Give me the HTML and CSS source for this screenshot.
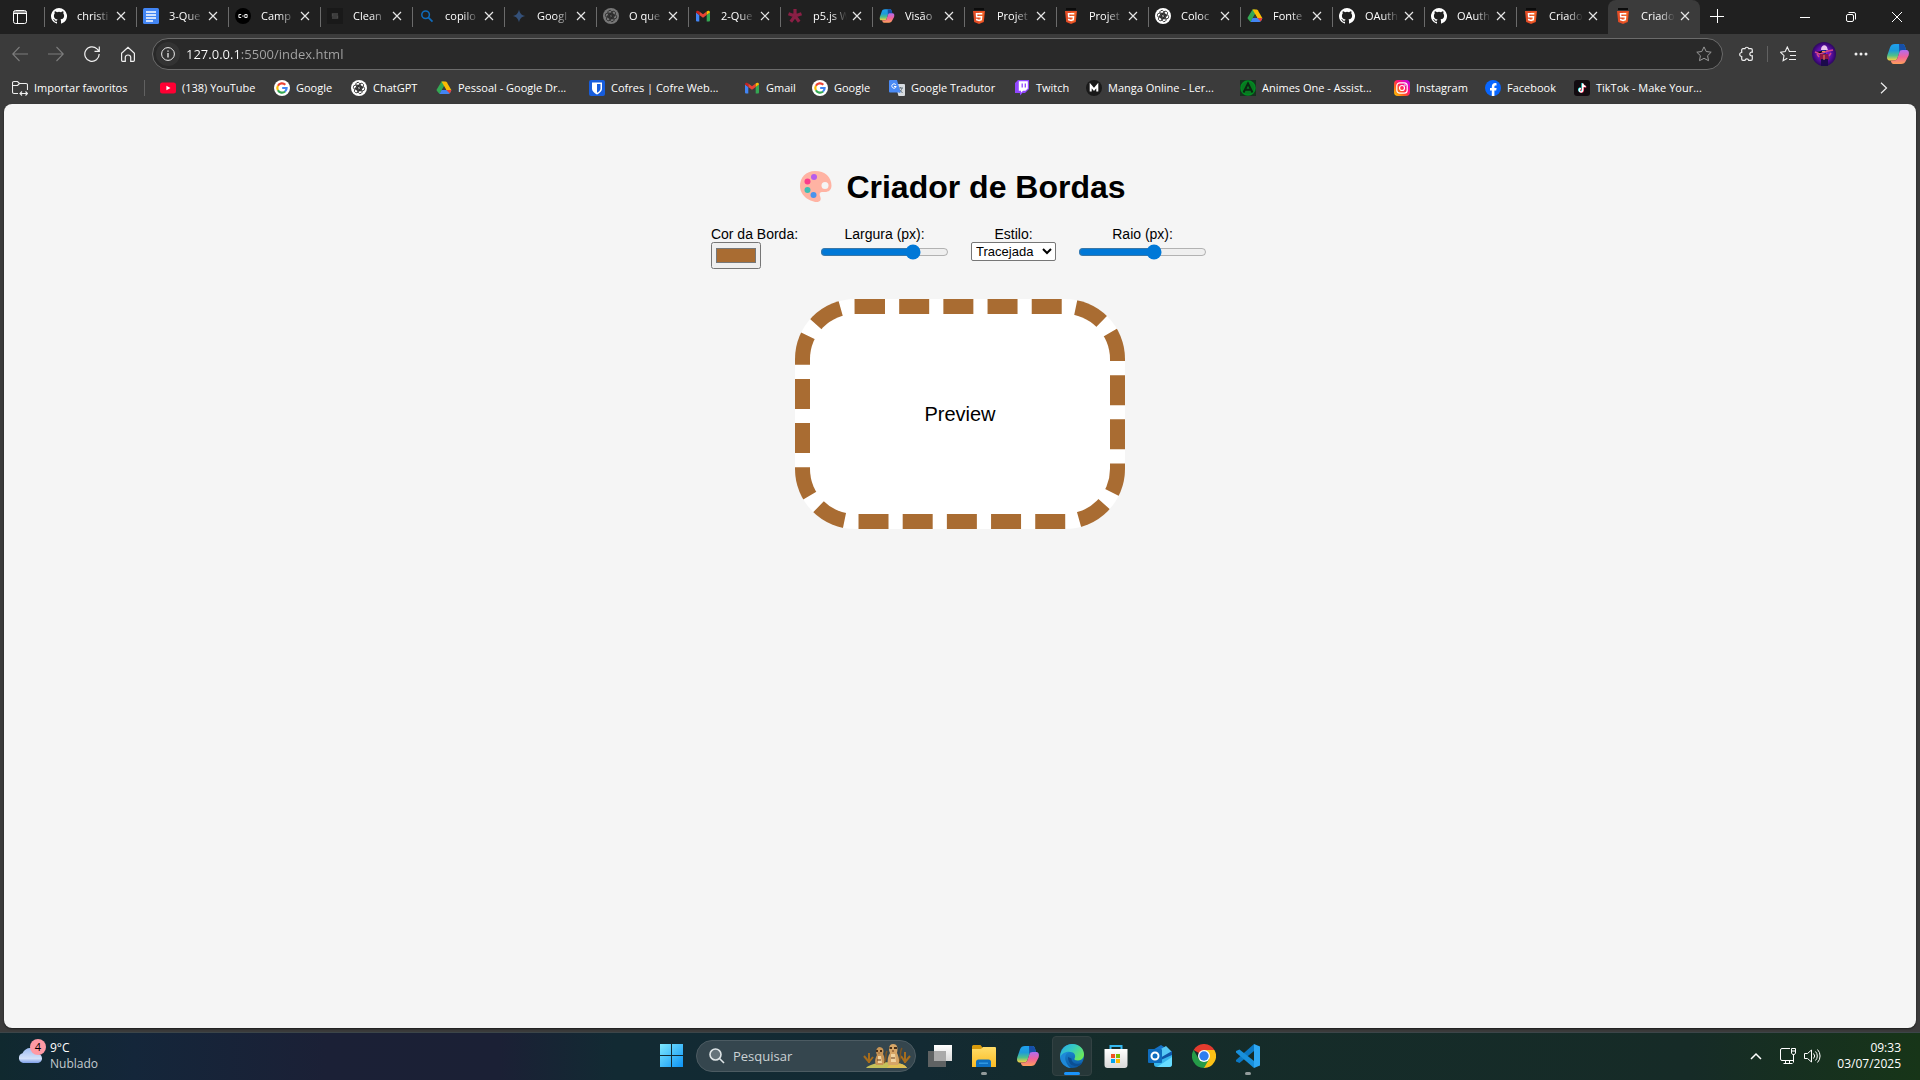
FILE: index.html
```html
<!DOCTYPE html>
<html lang="pt-BR">
<head>
<meta charset="utf-8">
<title>Criador de Bordas</title>
<link rel="stylesheet" href="styles.css">
</head>
<body>
<svg class="sprite" aria-hidden="true">
  <defs>
    <linearGradient id="g-blue" x1="0" y1="0" x2="0" y2="1"><stop offset="0" stop-color="#1fa0f0"/><stop offset=".4" stop-color="#1d9bd8"/><stop offset=".7" stop-color="#4fc08a"/><stop offset="1" stop-color="#ffd23c"/></linearGradient>
    <linearGradient id="g-pink" x1="0" y1="0" x2="0" y2="1"><stop offset="0" stop-color="#b06cf2"/><stop offset=".5" stop-color="#f0629a"/><stop offset="1" stop-color="#ffa05a"/></linearGradient>
    <linearGradient id="g-insta" x1="0" y1="1" x2="1" y2="0"><stop offset="0" stop-color="#ffd600"/><stop offset=".35" stop-color="#ff5a1f"/><stop offset=".6" stop-color="#ff0f7b"/><stop offset="1" stop-color="#b800ff"/></linearGradient>
    <linearGradient id="g-win" x1="0" y1="0" x2="1" y2="1"><stop offset="0" stop-color="#7fe9ff"/><stop offset="1" stop-color="#0c93f5"/></linearGradient>
    <linearGradient id="g-edge" x1="0" y1="0" x2="1" y2=".6"><stop offset="0" stop-color="#2aa9e8"/><stop offset=".5" stop-color="#35c9c0"/><stop offset="1" stop-color="#6be85a"/></linearGradient>
    <linearGradient id="g-edge2" x1="0" y1="0" x2="0" y2="1"><stop offset="0" stop-color="#1e94e0"/><stop offset="1" stop-color="#0c59a4"/></linearGradient>
    <linearGradient id="g-folder" x1="0" y1="0" x2="0" y2="1"><stop offset="0" stop-color="#ffdc68"/><stop offset="1" stop-color="#fbbc24"/></linearGradient>
    <linearGradient id="g-cloud" x1="0" y1="0" x2="0" y2="1"><stop offset="0" stop-color="#9fbdf2"/><stop offset=".7" stop-color="#d3e1fa"/><stop offset="1" stop-color="#7d9ee8"/></linearGradient>
    <linearGradient id="g-paper" x1="0" y1="0" x2="0" y2="1"><stop offset="0" stop-color="#fff"/><stop offset="1" stop-color="#d9d9d9"/></linearGradient>
    <radialGradient id="g-avatar"><stop offset="0" stop-color="#9a20d8"/><stop offset=".6" stop-color="#5d0fa5"/><stop offset="1" stop-color="#2c0660"/></radialGradient>
  </defs>
  <symbol id="i-github" viewBox="0 0 16 16"><path fill="#fff" d="M8 0a8 8 0 0 0-2.53 15.59c.4.07.55-.17.55-.38v-1.49c-2.23.48-2.7-.95-2.7-.95-.36-.92-.89-1.17-.89-1.17-.73-.5.06-.49.06-.49.8.06 1.23.83 1.23.83.71 1.22 1.87.87 2.33.66.07-.52.28-.87.5-1.07-1.77-.2-3.64-.89-3.64-3.95 0-.87.31-1.59.82-2.15-.08-.2-.36-1.02.08-2.12 0 0 .67-.21 2.2.82a7.6 7.6 0 0 1 4 0c1.53-1.04 2.2-.82 2.2-.82.44 1.1.16 1.92.08 2.12.51.56.82 1.27.82 2.15 0 3.07-1.87 3.75-3.65 3.95.29.25.54.73.54 1.48v2.2c0 .21.15.46.55.38A8 8 0 0 0 8 0z"/></symbol>
  <symbol id="i-docs" viewBox="0 0 16 16"><rect width="16" height="16" rx="1.5" fill="#4285f4"/><path d="M3 4h10M3 7h10M3 10h10M3 13h7" stroke="#fff" stroke-width="1.6"/></symbol>
  <symbol id="i-camp" viewBox="0 0 16 16"><circle cx="8" cy="8" r="8" fill="#000"/><path d="M6.2 6.5H3.900v3h2.300M7.2 8h1.600M9.800 6.500h2.300v3H9.800z" fill="none" stroke="#eee"/></symbol>
  <symbol id="i-clean" viewBox="0 0 16 16"><rect width="16" height="16" fill="#191919"/><path d="M11 6H5.5v2h5v2H5" fill="none" stroke="#484848" stroke-width="1.4"/></symbol>
  <symbol id="i-find" viewBox="0 0 16 16"><circle cx="6.600" cy="6.800" r="3.800" fill="none" stroke="#0f6cbd" stroke-width="1.500"/><path d="M9.500 9.700l4 4" stroke="#0f6cbd" stroke-width="1.700"/></symbol>
  <symbol id="i-gemini" viewBox="0 0 16 16"><path fill="#345078" d="M8 1.500c.8 4 2.500 5.700 6.500 6.500-4 .8-5.700 2.500-6.500 6.500C7.200 10.500 5.500 8.800 1.500 8 5.500 7.200 7.200 5.500 8 1.500z"/></symbol>
  <symbol id="i-knot" viewBox="0 0 16 16"><g fill="none" stroke="currentColor" stroke-width=".8"><rect x="2.300" y="5.200" width="8" height="4" rx="2"/><rect x="2.300" y="5.200" width="8" height="4" rx="2" transform="rotate(60 8 8)"/><rect x="2.300" y="5.200" width="8" height="4" rx="2" transform="rotate(120 8 8)"/><rect x="2.300" y="5.200" width="8" height="4" rx="2" transform="rotate(180 8 8)"/><rect x="2.300" y="5.200" width="8" height="4" rx="2" transform="rotate(240 8 8)"/><rect x="2.300" y="5.200" width="8" height="4" rx="2" transform="rotate(300 8 8)"/></g></symbol>
  <symbol id="i-gpt" viewBox="0 0 16 16"><circle cx="8" cy="8" r="8" fill="#fff"/><use href="#i-knot" color="#222"/></symbol>
  <symbol id="i-gpt-dim" viewBox="0 0 16 16"><circle cx="8" cy="8" r="8" fill="#777"/><use href="#i-knot" color="#282828"/></symbol>
  <symbol id="i-gmail" viewBox="0 0 16 16"><path fill="#4285f4" d="M1 4.500l3.300 2.500v6.500H2a1 1 0 0 1-1-1z"/><path fill="#34a853" d="M11.700 7 15 4.500v8a1 1 0 0 1-1 1h-2.300z"/><path fill="#ea4335" d="M4.300 3.400 8 6.200l3.700-2.800V7L8 9.800 4.300 7z"/><path fill="#c5221f" d="M1 4.500C1 2.600 3 2.300 4.300 3.400V7L1 4.500z"/><path fill="#fbbc04" d="M15 4.500c0-1.900-2-2.200-3.300-1.100V7L15 4.500z"/></symbol>
  <symbol id="i-p5" viewBox="0 0 16 16"><path d="M8 8V1M8 8l6.500-2.300M8 8l4.200 5.800M8 8l-4.200 5.800M8 8 1.500 5.700" stroke="#8a1f45" stroke-width="3.200"/></symbol>
  <symbol id="i-copilot" viewBox="0 0 24 24"><path fill="url(#g-blue)" d="M9 2h7.500c1.500 0 2 1 2.500 2.500L20 8h-3.500c-2 0-2.700.8-3.200 2.500L11.500 16c-.6 1.700-1.500 2.500-3.500 2.500H4C1 18.500.6 16 1.400 13L4 5.500C4.800 3 6.500 2 9 2z"/><path fill="#174fa8" d="M13 2h3.500C18 2 18.500 3 19 4.500L20 8h-3.500c-2 0-2.700.8-3.200 2.500z"/><path fill="url(#g-pink)" d="M15 22H7.500C6 22 5.500 21 5 19.500l-.5-1H8c2 0 2.900-.8 3.500-2.500l1.800-5.500C13.800 8.800 14.500 8 16.500 8H20c3 0 3.400 2.500 2.600 5.500L20 18.500c-.8 2.500-2.500 3.500-5 3.500z"/></symbol>
  <symbol id="i-html5" viewBox="0 0 16 16"><path fill="#0c0c0c" d="M3 0h10v2H3z"/><path fill="#e44d26" d="M2 3h12l-1.200 11L8 16l-4.800-2z"/><path fill="#f16529" d="M8 4h5l-1 9.300L8 14.800z"/><path fill="none" stroke="#fff" stroke-width="1.500" d="M11.300 5.800H5.500l.2 2.900h4.800l-.3 3L8 12.500l-2.300-.8v-1"/></symbol>
  <symbol id="i-drive" viewBox="0 0 16 16"><path fill="#34a853" d="M5.500 1.500h2.700L8 6.200 3.500 14 1 11c-.6-.9-.5-1 0-2z"/><path fill="#fbbc04" d="M5.500 1.500h4c.7 0 1 .3 1.300.8L15.300 10h-5z"/><path fill="#4285f4" d="M5.600 10h9.700c0 .8-.3 1.300-.7 2l-.8 1.300c-.3.500-.7.700-1.300.7h-9z"/><path fill="#ea4335" d="M10.300 10h5c0 .8-.3 1.300-.7 2l-.9 1.500z"/><path fill="#3b3b3b" d="M8 6.400 10 10H5.900z"/></symbol>
  <symbol id="i-youtube" viewBox="0 0 16 16"><rect y="2.500" width="16" height="11" rx="2.500" fill="#ff0033"/><path fill="#fff" d="M6.400 5.700 10.500 8l-4.100 2.300z"/></symbol>
  <symbol id="i-google" viewBox="0 0 16 16"><circle cx="8" cy="8" r="8" fill="#fff"/><g fill="none" stroke-width="2.200"><path stroke="#ea4335" d="M11.300 4.700A4.700 4.700 0 0 0 3.900 5.800"/><path stroke="#fbbc04" d="M3.900 5.700a4.700 4.700 0 0 0 0 4.600"/><path stroke="#34a853" d="M3.900 10.300a4.700 4.700 0 0 0 7.200 1.200"/><path stroke="#4285f4" d="M11 11.500A4.600 4.600 0 0 0 12.600 8H8.200"/></g></symbol>
  <symbol id="i-bitwarden" viewBox="0 0 16 16"><rect width="16" height="16" rx="2" fill="#175ddc"/><path fill="#fff" d="M3 2.500h10v6c0 3-2.500 4.600-5 6-2.500-1.400-5-3-5-6z"/><path fill="#175ddc" d="M8 4v8.700c2-1.200 3.500-2.400 3.500-4.300V4z"/></symbol>
  <symbol id="i-translate" viewBox="0 0 16 16"><path fill="#d8dce0" d="M6 4h9a1 1 0 0 1 1 1v10a1 1 0 0 1-1 1H9.500z"/><path fill="none" stroke="#66757f" d="M9 8h5M11.500 7v1M13 8c-.5 2-1.500 3.500-3 4.500M10.500 9.500l3 3.500"/><path fill="#4a8af4" d="M1 0h7l3.700 12.500H1a1 1 0 0 1-1-1V1a1 1 0 0 1 1-1z"/><path fill="none" stroke="#fff" d="M6.800 4.700A2.200 2.200 0 1 0 7.200 6.500H5"/></symbol>
  <symbol id="i-twitch" viewBox="0 0 16 16"><path fill="#9146ff" d="M4 0h11v9l-4 4H8.500L6 15.500V13H1V3z"/><path fill="#fff" d="M4.800 1.200h9v7.300l-2.300 2.300H9l-2 2v-2H4.800z"/><path d="M8.200 3.500v4M11.300 3.500v4" stroke="#9146ff" stroke-width="1.300"/></symbol>
  <symbol id="i-manga" viewBox="0 0 16 16"><circle cx="8" cy="8" r="8" fill="#191919"/><path d="M4.700 11.500v-6L8 9.500l3.300-4v6" fill="none" stroke="#fff" stroke-width="2"/></symbol>
  <symbol id="i-animes" viewBox="0 0 16 16"><rect width="16" height="16" fill="#17321f"/><circle cx="8" cy="8" r="7" fill="#087a20" stroke="#008c22" stroke-width="1.500"/><path d="M3.500 12.500 8 3.500l4.500 9M5.500 9.700h5" fill="none" stroke="#0b2612" stroke-width="2"/></symbol>
  <symbol id="i-instagram" viewBox="0 0 16 16"><rect width="16" height="16" rx="4" fill="url(#g-insta)"/><g fill="none" stroke="#fff" stroke-width="1.200"><rect x="2.800" y="2.800" width="10.400" height="10.400" rx="3"/><circle cx="8" cy="8" r="2.500"/></g><circle cx="11" cy="5" r=".8" fill="#fff"/></symbol>
  <symbol id="i-facebook" viewBox="0 0 16 16"><circle cx="8" cy="8" r="8" fill="#0866ff"/><path fill="#fff" d="M6.800 16v-5.400H5V8.100h1.800V7c0-2.700 1.300-3.900 3.500-3.900l1.200.1v2.200h-.8c-1 0-1.300.5-1.300 1.400v1.300h2.200l-.4 2.500H9.400V16z"/></symbol>
  <symbol id="i-tiktok" viewBox="0 0 16 16"><rect width="16" height="16" rx="3" fill="#120b10"/><g fill="none" stroke-width="1.500"><path stroke="#25f4ee" d="M8.100 3v6.800a1.700 1.700 0 1 1-1.700-1.700M8.100 3.500c.3 1.700 1.500 2.600 3 2.700"/><path stroke="#fe2c55" d="M9.300 3.800v6.800a1.700 1.700 0 1 1-1.700-1.700M9.300 4.300c.3 1.700 1.500 2.600 3 2.700"/><path stroke="#fff" d="M8.700 3.400v6.800A1.700 1.700 0 1 1 7 8.500M8.700 3.900c.3 1.700 1.500 2.600 3 2.700"/></g></symbol>
  <symbol id="i-x" viewBox="0 0 10 10"><path d="M1 1l8 8M9 1 1 9" stroke="#e6e6e6" stroke-width="1.200"/></symbol>
</svg>

<div class="desktop">
  <header class="browser">
    <nav class="tabstrip" aria-label="Guias">
      <button class="tab-menu" aria-label="Menu de guias"><svg width="16" height="16" viewBox="0 0 16 16" fill="none" stroke="#fff"><rect x="1.500" y="1.500" width="13" height="13" rx="2"/><path d="M1.500 3h13M1.500 4.500h13M5.500 4.500v10"/></svg></button>
      <ul class="tabs">
        <li class="tab"><svg><use href="#i-github"/></svg><a href="#">christi</a><button aria-label="Fechar"><svg><use href="#i-x"/></svg></button></li>
        <li class="tab"><svg><use href="#i-docs"/></svg><a href="#">3-Que</a><button aria-label="Fechar"><svg><use href="#i-x"/></svg></button></li>
        <li class="tab"><svg><use href="#i-camp"/></svg><a href="#">Camp</a><button aria-label="Fechar"><svg><use href="#i-x"/></svg></button></li>
        <li class="tab"><svg><use href="#i-clean"/></svg><a href="#">Clean</a><button aria-label="Fechar"><svg><use href="#i-x"/></svg></button></li>
        <li class="tab"><svg><use href="#i-find"/></svg><a href="#">copilo</a><button aria-label="Fechar"><svg><use href="#i-x"/></svg></button></li>
        <li class="tab"><svg><use href="#i-gemini"/></svg><a href="#">Googl</a><button aria-label="Fechar"><svg><use href="#i-x"/></svg></button></li>
        <li class="tab"><svg><use href="#i-gpt-dim"/></svg><a href="#">O que</a><button aria-label="Fechar"><svg><use href="#i-x"/></svg></button></li>
        <li class="tab"><svg><use href="#i-gmail"/></svg><a href="#">2-Que</a><button aria-label="Fechar"><svg><use href="#i-x"/></svg></button></li>
        <li class="tab"><svg><use href="#i-p5"/></svg><a href="#">p5.js W</a><button aria-label="Fechar"><svg><use href="#i-x"/></svg></button></li>
        <li class="tab"><svg><use href="#i-copilot"/></svg><a href="#">Visão</a><button aria-label="Fechar"><svg><use href="#i-x"/></svg></button></li>
        <li class="tab"><svg><use href="#i-html5"/></svg><a href="#">Projet</a><button aria-label="Fechar"><svg><use href="#i-x"/></svg></button></li>
        <li class="tab"><svg><use href="#i-html5"/></svg><a href="#">Projet</a><button aria-label="Fechar"><svg><use href="#i-x"/></svg></button></li>
        <li class="tab"><svg><use href="#i-gpt"/></svg><a href="#">Coloc</a><button aria-label="Fechar"><svg><use href="#i-x"/></svg></button></li>
        <li class="tab"><svg><use href="#i-drive"/></svg><a href="#">Fonte</a><button aria-label="Fechar"><svg><use href="#i-x"/></svg></button></li>
        <li class="tab"><svg><use href="#i-github"/></svg><a href="#">OAuth</a><button aria-label="Fechar"><svg><use href="#i-x"/></svg></button></li>
        <li class="tab"><svg><use href="#i-github"/></svg><a href="#">OAuth</a><button aria-label="Fechar"><svg><use href="#i-x"/></svg></button></li>
        <li class="tab"><svg><use href="#i-html5"/></svg><a href="#">Criado</a><button aria-label="Fechar"><svg><use href="#i-x"/></svg></button></li>
        <li class="tab active"><svg><use href="#i-html5"/></svg><a href="#">Criado</a><button aria-label="Fechar"><svg><use href="#i-x"/></svg></button></li>
      </ul>
      <button class="new-tab" aria-label="Nova guia"><svg width="14" height="14" viewBox="0 0 14 14" stroke="#fff"><path d="M7.500 0v14M0 7.500h14"/></svg></button>
      <div class="window-controls">
        <button aria-label="Minimizar"><svg width="10" height="10" stroke="#fff"><path d="M0 5.500h10"/></svg></button>
        <button aria-label="Restaurar"><svg width="10" height="10" fill="none" stroke="#fff"><rect x=".5" y="2.500" width="7" height="7" rx="1.500"/><path d="M2.500.5H8A1.500 1.500 0 0 1 9.500 2v5.500"/></svg></button>
        <button aria-label="Fechar janela"><svg width="10" height="10" stroke="#fff"><path d="M0 0l10 10M10 0 0 10"/></svg></button>
      </div>
    </nav>

    <div class="toolbar">
      <div class="nav-buttons">
        <button aria-label="Voltar"><svg width="16" height="16" fill="none" stroke="#7d7d7d" stroke-width="1.100"><path d="M16 8H.8M7.500 1 .7 8l6.800 7"/></svg></button>
        <button aria-label="Avançar"><svg width="16" height="16" fill="none" stroke="#7d7d7d" stroke-width="1.100"><path d="M0 8h15.200M8.500 1l6.800 7-6.800 7"/></svg></button>
        <button aria-label="Atualizar"><svg width="16" height="16" fill="none" stroke="#f0f0f0" stroke-width="1.200"><path d="M15.200 8A7.200 7.200 0 1 1 13 2.900L15 5M15.300.5V5.300h-4.800"/></svg></button>
        <button aria-label="Página inicial"><svg width="16" height="16" fill="none" stroke="#f0f0f0" stroke-width="1.200"><path d="M1.600 7.200 8 1.200l6.400 6v7.100c0 .6-.4 1-1 1h-2.700v-4c0-1.300-1-2.300-2.700-2.300S5.300 10 5.300 11.300v4H2.600c-.6 0-1-.4-1-1z"/></svg></button>
      </div>
      <div class="address">
        <button class="site-info" aria-label="Informações do site"><svg width="14" height="14" fill="none" stroke="#eee"><circle cx="7" cy="7" r="6.400"/><path d="M7 6v4.500M7 3.500v1.300" stroke-width="1.300"/></svg></button>
        <input type="text" aria-label="Endereço" value="127.0.0.1:5500/index.html">
        <button class="star" aria-label="Adicionar aos favoritos"><svg width="16" height="16" fill="none" stroke="#9a9a9a"><path d="M8 .9l2.200 4.600 5 .7-3.600 3.500.9 5L8 12.300l-4.500 2.400.9-5L.8 6.200l5-.7z"/></svg></button>
      </div>
      <div class="tools">
        <button aria-label="Extensões"><svg width="16" height="16" fill="none" stroke="#eee" stroke-width="1.200"><path d="M6 2.700a1.900 1.900 0 0 1 3.700 0H12a1.300 1.300 0 0 1 1.300 1.300v2.200a1.900 1.900 0 1 0 0 3.600V13a1.300 1.300 0 0 1-1.300 1.300H9.700a1.900 1.900 0 0 0-3.700 0H4A1.300 1.300 0 0 1 2.700 13v-2.500a2 2 0 0 1 0-4V4A1.300 1.300 0 0 1 4 2.700z"/></svg></button>
        <span class="divider"></span>
        <button aria-label="Favoritos"><svg width="16" height="16" fill="none" stroke="#eee" stroke-width="1.100"><path d="M10.200 5.500h-.8L7.300 1 5.200 5.500l-4.700.7L4 9.600 3.100 14.700 7.300 12.300M9.500 5.500H16M10 9.500h6M9 13.500h7"/></svg></button>
        <button aria-label="Perfil"><svg width="24" height="24"><circle cx="12" cy="12" r="12" fill="url(#g-avatar)"/><path fill="#e8c4ec" d="M9 8c0-6 6-6 6.500-1l1 2-3-1z"/><path fill="#162a9b" d="M9 8h5v4h-4z"/><path stroke="#d4468b" stroke-width="1.500" d="M3 10l5 2 8-3 5-1M7 15l-2-3M17 14l2-3"/><path fill="#8d1648" d="M8 12h8l1 6H8z"/><path fill="#1b0b4b" d="M9 17h7v7H9z"/><path stroke="#f08a4b" d="M10 9.500h3M12 13v5"/></svg></button>
        <button class="menu" aria-label="Configurações"><svg width="14" height="4" fill="#eee"><circle cx="2" cy="2" r="1.500"/><circle cx="7" cy="2" r="1.500"/><circle cx="12" cy="2" r="1.500"/></svg></button>
        <button aria-label="Copilot"><svg width="24" height="24"><use href="#i-copilot"/></svg></button>
      </div>
    </div>

    <nav class="bookmarks" aria-label="Favoritos">
      <a class="import" href="#"><svg width="16" height="16" fill="none" stroke="#eee" stroke-width="1.100"><path d="M6 13.500H2A1.500 1.500 0 0 1 .5 12V3A1.500 1.500 0 0 1 2 1.500h3.500L7.500 3.500H14A1.500 1.500 0 0 1 15.500 5v5M.5 5.500h5l2-2M8 13.500h7.500M10 11.500l-2 2 2 2M13.500 11.500l2 2-2 2"/></svg>Importar favoritos</a>
      <span class="divider"></span>
      <ul class="links">
        <li><a href="#"><svg><use href="#i-youtube"/></svg>(138) YouTube</a></li>
        <li><a href="#"><svg><use href="#i-google"/></svg>Google</a></li>
        <li><a href="#"><svg><use href="#i-gpt"/></svg>ChatGPT</a></li>
        <li><a href="#"><svg><use href="#i-drive"/></svg>Pessoal - Google Dr...</a></li>
        <li><a href="#"><svg><use href="#i-bitwarden"/></svg>Cofres | Cofre Web...</a></li>
        <li><a href="#"><svg><use href="#i-gmail"/></svg>Gmail</a></li>
        <li><a href="#"><svg><use href="#i-google"/></svg>Google</a></li>
        <li><a href="#"><svg><use href="#i-translate"/></svg>Google Tradutor</a></li>
        <li><a href="#"><svg><use href="#i-twitch"/></svg>Twitch</a></li>
        <li><a href="#"><svg><use href="#i-manga"/></svg>Manga Online - Ler...</a></li>
        <li><a href="#"><svg><use href="#i-animes"/></svg>Animes One - Assist...</a></li>
        <li><a href="#"><svg><use href="#i-instagram"/></svg>Instagram</a></li>
        <li><a href="#"><svg><use href="#i-facebook"/></svg>Facebook</a></li>
        <li><a href="#"><svg><use href="#i-tiktok"/></svg>TikTok - Make Your...</a></li>
      </ul>
      <button class="more" aria-label="Mais favoritos"><svg width="8" height="12" fill="none" stroke="#eee" stroke-width="1.200"><path d="M1 .8 6.500 6 1 11.200"/></svg></button>
    </nav>
  </header>

  <main class="page">
    <h1><svg width="43" height="36" viewBox="0 0 43 36" role="img" aria-label="Paleta"><path fill="#ffb3a3" d="M21 2c10 0 16.500 6 16.500 14.500 0 4.500-3 6.500-6.500 6.500-2.500 0-4-.5-5 1-1.300 2 1.500 4.500.5 7-1.500 3-6 2.200-10 .5C10 28.700 6 23 6 17 6 8.500 12 2 21 2z"/><circle cx="31" cy="16.500" r="3.500" fill="#f5f5f5"/><circle cx="20" cy="8" r="3" fill="#b65cec"/><circle cx="13.500" cy="12.500" r="3" fill="#fb3c8c"/><circle cx="13.500" cy="21" r="3" fill="#3fbdb4"/><circle cx="19.500" cy="26" r="3" fill="#4a93ec"/></svg> Criador de Bordas</h1>
    <form class="controls">
      <label class="control start">Cor da Borda:<input type="color" value="#a96c32"></label>
      <label class="control">Largura (px):<input type="range" min="0" max="20" value="15"></label>
      <label class="control">Estilo:<select><option>Tracejada</option></select></label>
      <label class="control">Raio (px):<input type="range" min="0" max="100" value="60"></label>
    </form>
    <div class="preview">Preview</div>
  </main>

  <footer class="taskbar">
    <a class="weather" href="#">
      <span class="weather-icon"><svg width="24" height="15"><path fill="url(#g-cloud)" d="M5 15a5 5 0 0 1-.5-9.700C6 2 9 0 12 0c4 0 6.500 2.500 7.500 5.500C22.500 6 24 8 24 10.500S22 15 19 15z"/></svg><span class="badge">4</span></span>
      <span class="weather-text"><strong>9°C</strong><span>Nublado</span></span>
    </a>
    <div class="dock">
      <button class="app start-button" aria-label="Iniciar"><svg width="24" height="24"><path fill="url(#g-win)" d="M0 0h11v11H0zM12 0h11v11H12zM0 12h11v11H0zM12 12h11v11H12z"/></svg></button>
      <label class="search">
        <svg width="16" height="16" fill="none" stroke="#dfe5e7" stroke-width="1.600"><circle cx="6.500" cy="6.500" r="5.500" fill="#65737a"/><path d="M10.500 10.500l4.500 4.500"/></svg>
        <input type="text" aria-label="Pesquisar" placeholder="Pesquisar">
        <svg width="48" height="26"><path fill="#c4c05a" d="M3 25c4-6 36-9 41 0z"/><path fill="#e0bf54" d="M24 25c2-5 16-7 20 0z"/><path fill="none" stroke="#a66c1c" stroke-width="2" d="M6 19 1 13M6 20V10M6 19l4-5M42 19l5-6M42 20V9M42 19l-4-6"/><path fill="none" stroke="#7d5420" stroke-width="1.500" d="M21 20c3-3 1-9 3-12M35 20c4-4 1-11 4-15"/><path fill="#c79456" d="M13 22c-2-4 0-8 1-10-1-2-2-6 2-8 5 0 5 4 4 7 2 3 2 8 0 11z"/><path fill="#d6a566" d="M25 22c-1-5 0-9 2-12-2-4-1-9 3-9 5 0 5 5 4 9 2 4 3 9 1 12z"/><path fill="#f0d3a0" d="M15 13h3l1 7h-4zM28 11h4l1 8h-5z"/><path stroke="#4a2f17" stroke-width="1.800" d="M13 8h2M17 8h2M26.500 5h2.500M31 5h3"/><path stroke="#6b3f1c" stroke-width="1.200" d="M15.500 10h1M29 8h2M14 17h4M28 15h4"/></svg>
      </label>
      <button class="app" aria-label="Visão de tarefas"><svg width="24" height="24"><path fill="url(#g-paper)" d="M6 1h18v16H6z"/><path fill="#5f6263" d="M0 7h18v16H0z"/><path fill="#aaa" d="M6 7h12v10H6z"/></svg></button>
      <button class="app running" aria-label="Explorador de Arquivos"><svg width="24" height="24"><path fill="#d79a0c" d="M0 2.500A1.500 1.500 0 0 1 1.500 1h7l2 2.500V8H0z"/><path fill="url(#g-folder)" d="M0 5h9l2-2h12a1 1 0 0 1 1 1v19H0z"/><path fill="#0e6fc0" d="M4 23v-5a2.500 2.500 0 0 1 2.500-2.500h10A2.500 2.500 0 0 1 19 18v5z"/><path fill="#3098e0" d="M7 18.500h9v1.500H7z"/></svg></button>
      <button class="app" aria-label="Copilot"><svg width="24" height="24"><use href="#i-copilot"/></svg></button>
      <button class="app current" aria-label="Microsoft Edge"><svg width="24" height="24"><circle cx="12" cy="12" r="12" fill="url(#g-edge2)"/><path fill="#0b4f94" d="M8 13c0 7 5 10 10 9 2-.5 4-2 4.500-3.500-6 3-11 .5-11-4z"/><path fill="url(#g-edge)" d="M.5 10C2 3.500 7 0 12.300 0 19 0 24 4.800 24 10.300c0 3.700-2.500 6.200-6 6.200-3 0-4-1-3.500-2 1.500-2 .5-6.500-4-6.500-5 0-8 2.500-10 6-.3-1.300-.3-2.700 0-4z"/><path fill="#1e89d8" d="M.2 13C2 9 6 7.500 10 7.700c-4 1-6 5-4 10 1 3 3 5 5 6.200C5 23.800 0 18.500.2 13z"/></svg></button>
      <button class="app" aria-label="Microsoft Store"><svg width="24" height="24"><path fill="none" stroke="#35b8f0" stroke-width="2" d="M6.500 7V2h11v5"/><path fill="url(#g-paper)" d="M.5 5h23v16a3 3 0 0 1-3 3h-17a3 3 0 0 1-3-3z"/><path fill="#f25022" d="M7 10h4v4H7z"/><path fill="#7fba00" d="M12 10h4v4h-4z"/><path fill="#00a4ef" d="M7 15h4v4H7z"/><path fill="#ffb900" d="M12 15h4v4h-4z"/></svg></button>
      <button class="app" aria-label="Outlook"><svg width="24" height="24"><path fill="#1572c8" d="M3 7 13 1l11 7v7H3z"/><path fill="#57c8f5" d="M8 8 18 2l6 6-9 7z"/><path fill="#1056a8" d="M12 14 24 7v6l-7 5z"/><path fill="#37b7ee" d="M6 19l18-8v9a3 3 0 0 1-3 3H9a3 3 0 0 1-3-3z"/><path fill="#67dcff" d="M9 23l15-10v7a3 3 0 0 1-3 3z"/><rect y="5" width="14" height="14" rx="1" fill="#0f6cbd"/><circle cx="7" cy="12" r="3.500" fill="none" stroke="#fff" stroke-width="2"/></svg></button>
      <button class="app" aria-label="Google Chrome"><svg width="24" height="24"><path fill="#e33b2e" d="M12 12 1.600 6A12 12 0 0 1 22.400 6z"/><path fill="#fbc116" d="M12 12V6h10.400A12 12 0 0 1 12 24z"/><path fill="#259b48" d="M12 12l5.200 3L12 24A12 12 0 0 1 1.600 6L6.800 15z"/><circle cx="12" cy="12" r="6" fill="#fff"/><circle cx="12" cy="12" r="4.700" fill="#2f7df0"/></svg></button>
      <button class="app running" aria-label="Visual Studio Code"><svg width="24" height="24"><path fill="#0b78c4" d="M18 0v7L3.500 19 0 17.500V16z"/><path fill="#1890dc" d="M18 24v-7L3.500 5.500 0 7v1.500z"/><path fill="#2ea8f5" d="M18 0l6 2.500v19L18 24z"/></svg></button>
    </div>
    <div class="tray">
      <button aria-label="Mostrar ícones ocultos"><svg width="12" height="8" fill="none" stroke="#fff" stroke-width="1.500"><path d="M1 7l5-5 5 5"/></svg></button>
      <button class="status" aria-label="Rede e volume"><svg width="17" height="17" fill="none" stroke="#fff"><path d="M10 1.500H2A1.500 1.500 0 0 0 .5 3v9A1.500 1.500 0 0 0 2 13.500h11.500M3.500 16.500h9M5.500 14v2M9.500 14v2M11.500 1.500h4V6l-1 1.500h-2l-1-1.500zM11.500 4h4M13.500 7.500v8"/></svg><svg width="17" height="16" fill="none" stroke="#fff"><path d="M.5 5.500h3L7.500 2v12l-4-3.500h-3zM9.500 5.500a3.500 3.500 0 0 1 0 5M11.500 3.500a6.500 6.500 0 0 1 0 9M13.500 1.500a9.500 9.500 0 0 1 0 13"/></svg></button>
      <time class="clock" datetime="2025-07-03T09:33"><span>09:33</span><span>03/07/2025</span></time>
    </div>
  </footer>
</div>
</body>
</html>
```
FILE: styles.css
```css
* {
  box-sizing: border-box;
}

body {
  margin: 0;
  background: #3b3b3b;
  color: #fff;
  font: 11px/16px "Open Sans", "Noto Sans", sans-serif;
}

button {
  display: flex;
  align-items: center;
  justify-content: center;
  margin: 0;
  padding: 0;
  border: 0;
  background: none;
}

a {
  color: inherit;
  text-decoration: none;
}

ul {
  margin: 0;
  padding: 0;
  list-style: none;
}

svg {
  flex: none;
}

.sprite {
  position: absolute;
  width: 0;
  height: 0;
}

.desktop {
  display: flex;
  flex-direction: column;
  min-height: 100vh;
}

/* Tab strip */
.tabstrip {
  display: flex;
  height: 34px;
  background: #202020;
}

.tab-menu {
  width: 40px;
  margin-right: 4px;
}

.tabs {
  display: flex;
  min-width: 0;
}

.tab {
  display: flex;
  align-items: center;
  flex: 0 1 92px;
  width: 92px;
  height: 32px;
  padding-left: 7px;
  padding-right: 10px;
  background: linear-gradient(#6b6b6b, #6b6b6b) 0 7px / 1px 20px no-repeat;
}

.tab > svg {
  width: 16px;
  height: 16px;
  margin-right: 10px;
}

.tab a {
  flex: 1;
  min-width: 0;
  margin-right: 4px;
  overflow: hidden;
  white-space: nowrap;
  mask-image: linear-gradient(90deg, #000 18px, transparent 34px);
}

.tab button svg {
  width: 10px;
  height: 10px;
}

.tab.active {
  height: 34px;
  padding-bottom: 2px;
  border-radius: 8px 8px 0 0;
  background: #3b3b3b;
}

.new-tab {
  width: 34px;
  height: 32px;
}

.window-controls {
  display: flex;
  margin-left: auto;
}

.window-controls button {
  width: 46px;
}

/* Toolbar */
.toolbar {
  display: flex;
  align-items: center;
  height: 38px;
  padding-top: 2px;
}

.nav-buttons {
  display: flex;
  gap: 20px;
  padding: 0 16px 0 12px;
}

.nav-buttons button {
  width: 16px;
  height: 16px;
}

.address {
  display: flex;
  align-items: center;
  flex: 1;
  height: 32px;
  padding: 0 10px 0 3px;
  border: 1px solid #6b6b6b;
  border-radius: 16px;
  background: #292929;
}

.site-info {
  width: 24px;
  height: 24px;
  border-radius: 50%;
  background: #333;
}

.address input {
  flex: 1;
  min-width: 0;
  padding: 0;
  margin-left: 6px;
  border: 0;
  outline: 0;
  font: 13px/20px "Open Sans", "Noto Sans", sans-serif;
  color: transparent;
  background: linear-gradient(90deg, #fff 54px, #a6a6a6 54px);
  background-clip: text;
}

.tools {
  display: flex;
  align-items: center;
  gap: 16px;
  padding: 0 10px 0 16px;
}

.divider {
  width: 1px;
  height: 16px;
  background: #616161;
}

.tools .divider {
  margin: 0 -4px;
}

.menu {
  width: 18px;
}

/* Bookmarks bar */
.bookmarks {
  display: flex;
  align-items: center;
  height: 32px;
  padding: 0 32px 0 12px;
}

.import {
  display: flex;
  align-items: center;
  gap: 6px;
  width: 132px;
  white-space: nowrap;
}

.links {
  display: grid;
  grid-template-columns: 114px 77px 85px 153px 155px 68px 77px 125px 72px 154px 154px 91px 89px 131px;
  margin-left: 15px;
}

.links a {
  display: flex;
  align-items: center;
  gap: 6px;
  white-space: nowrap;
}

.links svg {
  width: 16px;
  height: 16px;
}

.more {
  margin-left: auto;
}

/* Web page */
.page {
  flex: 1;
  display: flex;
  flex-direction: column;
  align-items: center;
  margin: 0 4px 4px;
  padding-top: 60px;
  border-radius: 8px;
  background: #f5f5f5;
  box-shadow: 0 1px 2px #1c1c1c;
  color: #000;
  font-family: "Liberation Sans", Arial, sans-serif;
}

h1 {
  display: flex;
  align-items: center;
  gap: 9px;
  margin: 5px 0 21px;
  font-size: 32px;
  line-height: 36px;
}

.controls {
  display: flex;
  gap: 20px;
  margin-bottom: 30px;
  font-size: 14px;
}

.control {
  display: flex;
  flex-direction: column;
  align-items: center;
  line-height: 16px;
}

.control.start {
  align-items: flex-start;
}

.control input[type="color"] {
  width: 50px;
  height: 27px;
}

.control input[type="range"] {
  width: 129px;
  height: 16px;
  margin: 2px;
  accent-color: #0078d7;
}

.control select {
  width: 85px;
  height: 19px;
  border: 1px solid #767676;
  border-radius: 2px;
  background: #fff;
  font: 13px "Liberation Sans", Arial, sans-serif;
}

.preview {
  display: flex;
  align-items: center;
  justify-content: center;
  box-sizing: content-box;
  width: 300px;
  height: 200px;
  border: 15px dashed #a96c32;
  border-radius: 60px;
  background: #fff;
  font-size: 20px;
}

/* Taskbar */
.taskbar {
  display: grid;
  grid-template-columns: 1fr auto 1fr;
  align-items: center;
  height: 48px;
  padding-bottom: 2px;
  border-top: 1px solid #3c4549;
  background: linear-gradient(90deg, #10292f 0%, #14263a 7%, #1b2036 17%, #1b2035 26%, #122a33 32%, #132a33 48%, #152c2a 58%, #162b27 88%, #173518 100%);
}

.weather {
  display: flex;
  align-items: center;
  gap: 8px;
  padding-left: 18px;
}

.weather-icon {
  position: relative;
  width: 24px;
  height: 15px;
}

.badge {
  position: absolute;
  left: 12px;
  top: -9px;
  width: 16px;
  height: 16px;
  border-radius: 50%;
  background: #ff99a4;
  color: #000;
  text-align: center;
}

.weather-text {
  display: flex;
  flex-direction: column;
  color: #c4cacf;
  font-size: 12px;
}

.weather-text strong {
  color: #fff;
  font-weight: 400;
}

.dock {
  display: flex;
  align-items: center;
  gap: 4px;
}

.app {
  position: relative;
  width: 40px;
  height: 40px;
  border-radius: 4px;
}

.app.current {
  background: #263738;
  border: 1px solid #334243;
}

.app.running::after,
.app.current::after {
  content: "";
  position: absolute;
  bottom: 1px;
  width: 6px;
  height: 3px;
  border-radius: 2px;
  background: #939b9b;
}

.app.current::after {
  bottom: 0;
  width: 16px;
  background: #1a94fc;
}

.search {
  display: flex;
  align-items: center;
  width: 220px;
  height: 32px;
  padding: 0 4px 0 12px;
  border: 1px solid #4c5b62;
  border-radius: 16px;
  background: #35464e;
}

.search input {
  flex: 1;
  min-width: 0;
  padding: 0;
  margin-left: 8px;
  border: 0;
  outline: 0;
  background: none;
  font: 13px/20px "Open Sans", "Noto Sans", sans-serif;
}

.search input::placeholder {
  color: #ccd2d4;
}

.tray {
  display: flex;
  align-items: center;
  justify-content: flex-end;
  padding-right: 19px;
}

.status {
  gap: 7px;
  margin: 0 16px 0 18px;
}

.clock {
  display: flex;
  flex-direction: column;
  font-size: 12px;
  text-align: right;
}
```
